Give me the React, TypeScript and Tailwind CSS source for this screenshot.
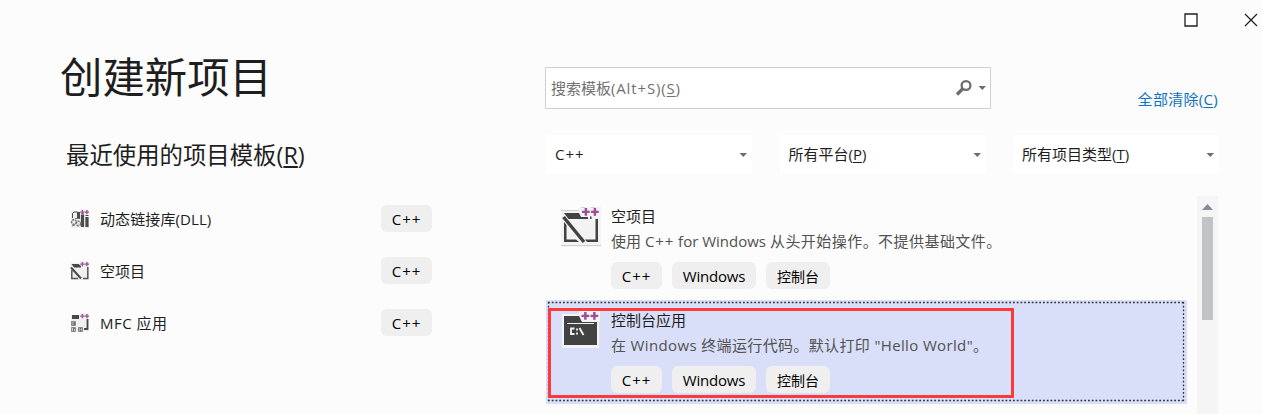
import type { ReactNode } from "react";

function Plus({ x, y, s = 1 }: { x: number; y: number; s?: number }) {
  return <path transform={`translate(${x} ${y}) scale(${s})`} d="M3 0h2.8v3h3v2.8h-3v3H3v-3H0V3h3z" fill="#9b4f96" />;
}

function EmptyProjectIcon() {
  return (
    <svg width="40" height="40" viewBox="0 0 40 40" className="shrink-0">
      <path d="M0 3h19V0h21v40H0z" fill="#f4f3f3" />
      <path d="M0 3.500h18M0 38.500h40M20 .5h4M30 .5h4" stroke="#d0d0d0" fill="none" />
      <path d="M3 6h15l2 4h7v2H7.500z" fill="#424242" />
      <path d="M29 9.500h1.500V12H29zM34.500 12H37v23H26l-2-2.500h10.500zM3 15l2.500 3v14.500H15l3 2.500H3z" fill="#424242" />
      <path d="M2.500 10L23 35" stroke="#424242" strokeWidth="3.400" />
      <Plus x={21} y={1} s={0.88} />
      <Plus x={30} y={1} s={0.88} />
    </svg>
  );
}

function ConsoleIcon() {
  return (
    <svg width="40" height="40" viewBox="0 0 40 40" className="shrink-0">
      <path d="M1 3h17V0h21v9l-1 3v25H1z" fill="#f5f4f5" />
      <path d="M3 5h15l3 6h15v23H3z" fill="#424242" />
      <path d="M6 12.500h27" stroke="#f0f0f0" />
      <path d="M13.500 17.500H10v5.500h3.500M16 17.500v2M16 21.500v2M18.500 17l4 7" fill="none" stroke="#f4f4f4" strokeWidth="1.800" />
      <Plus x={20.500} y={1} s={0.88} />
      <Plus x={29.500} y={1} s={0.88} />
    </svg>
  );
}

function SmallIcon({ kind }: { kind: string }) {
  return (
    <svg width="20" height="20" viewBox="0 0 20 20" className="shrink-0">
      <path d="M1 2h9V0h9v19H1z" fill="#f0f0f0" />
      {kind === "dll" && (
        <g fill="none" stroke="#4c4c4c">
          <path d="M2.500 9V4.500L4 3h3.500v6" />
          <path d="M9 3v7" strokeWidth="2" />
          <path d="M12.500 6v12M17 8v10" strokeWidth="3.200" />
          <path d="M11 5h3M15.500 6.500h3" />
          <circle cx="4" cy="13" r="2.400" stroke="#777" strokeWidth="1.600" strokeDasharray="2 .8" />
          <circle cx="8.500" cy="14.500" r="2.200" stroke="#777" strokeWidth="1.600" strokeDasharray="2 .8" />
          <path d="M5 9.500h4M2 17l3-1" stroke="#777" />
        </g>
      )}
      {kind === "empty" && (
        <g>
          <path d="M1.500 3h7L11 5v1.500H4z" fill="#484848" />
          <path d="M17.800 6v11.500H13M1.800 9v8.500H8" fill="none" stroke="#555" strokeWidth="1.500" />
          <path d="M1 6.500l10 11" stroke="#484848" strokeWidth="2" />
        </g>
      )}
      {kind === "mfc" && (
        <g>
          <path d="M2 2h7v4H2z" fill="#484848" />
          <path d="M17.500 6v10H14" fill="none" stroke="#484848" strokeWidth="1.800" />
          <path d="M1.500 8.500h4v4h-4zM1.500 14.500h4v4h-4zM8.500 14.500h4v4h-4z" fill="#ccc" stroke="#888" />
          <path d="M3 12v-2.500l.8 1 .7-1V12M3.500 18v-2.500h1.500M11.500 15.500h-1.500v2h1.500" fill="none" stroke="#555" strokeWidth=".8" />
        </g>
      )}
      <Plus x={10.300} y={1} s={0.48} />
      <Plus x={14.800} y={1} s={0.48} />
    </svg>
  );
}

function Caret() {
  return (
    <svg width="8" height="4" viewBox="0 0 8 4" className="shrink-0">
      <path d="M.5 0h7.500L4.300 4z" fill="#6d6d6d" />
    </svg>
  );
}

function Tag({ children, className }: { children: ReactNode; className: string }) {
  return (
    <span className={`flex h-[27px] items-center justify-center rounded-md bg-[#efefef] pt-px text-black ${className}`}>
      {children}
    </span>
  );
}

function Select({ children, className = "" }: { children: ReactNode; className?: string }) {
  return (
    <div className={`flex h-[39px] w-[206px] items-center justify-between bg-white pr-[5px] pl-[9px] ${className}`}>
      <span>{children}</span>
      <Caret />
    </div>
  );
}

function Template({ icon, title, children }: { icon: ReactNode; title: string; children: ReactNode }) {
  return (
    <div className="flex gap-[10px]">
      <div className="pt-[3px]">{icon}</div>
      <div className="leading-[25px]">
        <div className="text-[#1e1e1e]">{title}</div>
        <div className="whitespace-nowrap text-[#515151]">{children}</div>
        <div className="mt-2 flex gap-[10px]">
          <Tag className="w-[51px] tracking-[0.9px]">C++</Tag>
          <Tag className="w-[84px] tracking-[-0.2px]">Windows</Tag>
          <Tag className="w-[64px] text-[14px]">控制台</Tag>
        </div>
      </div>
    </div>
  );
}

const recent = [
  { kind: "dll", name: "动态链接库(DLL)", spacing: "tracking-[0.1px]" },
  { kind: "empty", name: "空项目", spacing: "tracking-normal" },
  { kind: "mfc", name: "MFC 应用", spacing: "tracking-[0.5px]" },
];

export default function App() {
  return (
    <div className="relative flex h-[414px] w-[1263px] flex-col overflow-hidden bg-[#fcfcfc] font-['Open_Sans','Noto_Sans_CJK_SC',sans-serif] text-[15px] text-[#1e1e1e]">
      <div className="flex h-10 shrink-0 items-center justify-end gap-[46px] pr-[5px]">
        <svg width="14" height="14" viewBox="0 0 14 14">
          <path d="M1 1h12v12H1z" fill="#fff" stroke="#1e1e1e" strokeWidth="1.300" />
        </svg>
        <svg width="14" height="14" viewBox="0 0 14 14">
          <path d="M1 1l12 12M13 1L1 13" stroke="#1e1e1e" strokeWidth="1.200" />
        </svg>
      </div>

      <div className="flex min-h-0 grow">
        <div className="w-[545px] shrink-0 pl-[60px]">
          <h1 className="h-[76px] text-[42.4px] leading-[74px]">创建新项目</h1>
          <h2 className="h-[76px] pl-[6px] text-[23.4px] leading-[78px]">
            最近使用的项目模板(<span className="underline underline-offset-2">R</span>)
          </h2>
          <div className="pl-[10px]">
            {recent.map((r) => (
              <div key={r.kind} className="flex h-[52px] items-center pt-px">
                <SmallIcon kind={r.kind} />
                <span className={`w-[291px] pt-[2px] pl-[10px] ${r.spacing}`}>{r.name}</span>
                <Tag className="w-[51px] tracking-[0.9px]">C++</Tag>
              </div>
            ))}
          </div>
        </div>

        <div className="flex w-[674px] shrink-0 flex-col pt-[27px]">
          <div className="flex h-[42px] items-start justify-between">
            <div className="flex h-[42px] w-[446px] items-center border border-[#cccedb] bg-white pr-1 pl-[5px] text-[#717171]">
              <span className="grow">
                搜索模板
                <span className="tracking-[0.85px]">
                  (Alt+S)(<span className="underline underline-offset-2">S</span>)
                </span>
              </span>
              <svg width="18" height="18" viewBox="0 0 18 18" className="mr-[5px]">
                <circle cx="11" cy="6.500" r="4.400" fill="none" stroke="#6d6d6d" strokeWidth="2.300" />
                <path d="M8 9.500L2 15.500" stroke="#6d6d6d" strokeWidth="3.400" />
              </svg>
              <Caret />
            </div>
            <a className="mt-[21px] pr-px tracking-[0.3px] text-[#0e70c0]">
              全部清除(<span className="underline underline-offset-2">C</span>)
            </a>
          </div>

          <div className="mt-[26px] flex justify-between pl-px">
            <Select className="tracking-[1px]">C++</Select>
            <Select>
              所有平台(<span className="underline underline-offset-2">P</span>)
            </Select>
            <Select>
              所有项目类型(<span className="underline underline-offset-2">T</span>)
            </Select>
          </div>

          <div className="mt-[22px] flex grow justify-between pr-px pl-px">
            <div className="w-[641px]">
              <div className="h-[104px] pt-2 pl-[15px]">
                <Template icon={<EmptyProjectIcon />} title="空项目">
                  使用 <span className="tracking-[0.9px]">C++</span> for Windows{" "}
                  <span className="tracking-[0.45px]">从头开始操作。不提供基础文件。</span>
                </Template>
              </div>
              <div className="relative h-[104px] bg-[#dadff9] pt-2 pl-[15px]">
                <svg width="641" height="104" viewBox="0 0 641 104" className="absolute inset-0">
                  <path
                    d="M2 2.500h636.500M2 100.500h636.500M2.500 2v99M637.500 2v99"
                    fill="none"
                    stroke="#30303a"
                    strokeDasharray="1.800 1.950"
                    strokeWidth="1.300"
                  />
                </svg>
                <Template icon={<ConsoleIcon />} title="控制台应用">
                  <span className="tracking-[0.36px]">在 Windows 终端运行代码。默认打印 "Hello World"。</span>
                </Template>
              </div>
            </div>
            <div className="flex w-[21px] flex-col items-center bg-[#f5f5f5] pt-2">
              <svg width="11" height="6" viewBox="0 0 11 6">
                <path d="M5.500 0L11 6H0z" fill="#868999" />
              </svg>
              <div className="mt-[7px] h-[103px] w-[11px] bg-[#c2c3c9]" />
            </div>
          </div>
        </div>
      </div>

      <div className="absolute top-[308px] left-[548px] h-[90px] w-[466px] border-[3px] border-[#fb3a39]" />
    </div>
  );
}
